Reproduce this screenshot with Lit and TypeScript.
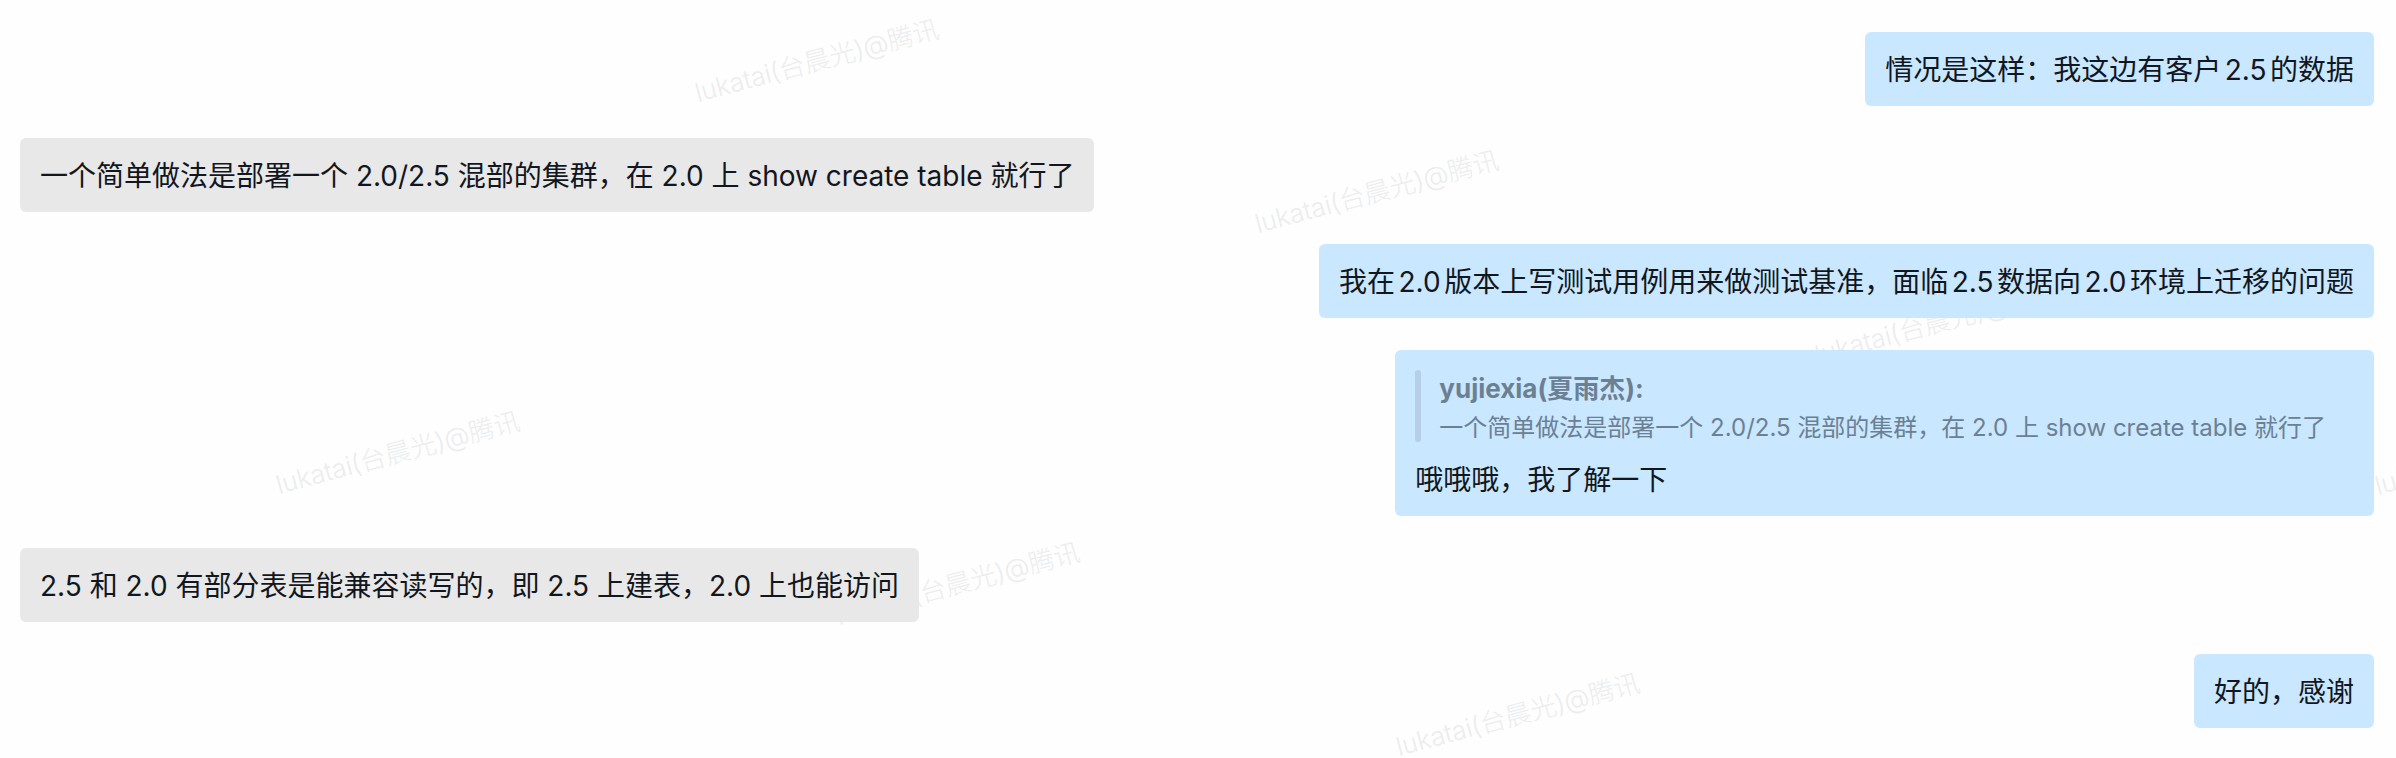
import { LitElement, html, css, nothing } from "lit";
import { customElement, property } from "lit/decorators.js";

interface Quote {
  author: string;
  text: string;
}

interface Message {
  mine: boolean;
  text: string;
  quote?: Quote;
}

const MESSAGES: Message[] = [
  { mine: true, text: "情况是这样：我这边有客户2.5的数据" },
  { mine: false, text: "一个简单做法是部署一个 2.0/2.5 混部的集群，在 2.0 上 show create table 就行了" },
  { mine: true, text: "我在2.0版本上写测试用例用来做测试基准，面临2.5数据向2.0环境上迁移的问题" },
  {
    mine: true,
    text: "哦哦哦，我了解一下",
    quote: {
      author: "yujiexia(夏雨杰):",
      text: "一个简单做法是部署一个 2.0/2.5 混部的集群，在 2.0 上 show create table 就行了",
    },
  },
  { mine: false, text: "2.5 和 2.0 有部分表是能兼容读写的，即 2.5 上建表，2.0 上也能访问" },
  { mine: true, text: "好的，感谢" },
];

const MARK_TEXT = "lukatai(台晨光)@腾讯";

// Watermarks sit on a slanted lattice: one step right also moves down.
const MARK_STEP = { x: 560, y: 131 };
const MARK_ROWS = [
  { x: 699, y: 106, count: 4 },
  { x: 280, y: 498, count: 3 },
];

@customElement("chat-bubble")
export class ChatBubble extends LitElement {
  @property({ attribute: false }) message!: Message;

  static styles = css`
    :host {
      display: block;
      max-width: 100%;
    }
    .bubble {
      box-sizing: border-box;
      padding: 20px 20px 18px;
      border-radius: 6px;
      background: #e8e8e8;
      color: #12161d;
      font-size: 28px;
      line-height: 36px;
    }
    .mine {
      background: #c9e7ff;
      text-autospace: normal;
    }
    .text {
      margin: 0;
    }
    .quote {
      position: relative;
      margin: 0 0 14px;
      padding: 0 28px 0 24px;
      color: #6c8093;
      font-size: 24px;
      line-height: 40px;
    }
    .quote::before {
      content: "";
      position: absolute;
      inset: 0 auto 6px 0;
      width: 6px;
      border-radius: 3px;
      background: #b5d0e6;
    }
    .author {
      display: block;
      font-size: 26px;
      line-height: 38px;
      font-style: normal;
      font-weight: 700;
    }
    .quoted {
      margin: 0;
    }
  `;

  render() {
    const { mine, text, quote } = this.message;
    return html`
      <div class="bubble ${mine ? "mine" : ""}">
        ${quote
          ? html`<blockquote class="quote">
              <cite class="author">${quote.author}</cite>
              <p class="quoted">${quote.text}</p>
            </blockquote>`
          : nothing}
        <p class="text">${text}</p>
      </div>
    `;
  }
}

@customElement("app-root")
export class AppRoot extends LitElement {
  static styles = css`
    :host {
      display: block;
      position: relative;
      box-sizing: border-box;
      min-height: 100vh;
      overflow: hidden;
      background: #fefefe;
      font-family: Inter, "Noto Sans CJK SC", sans-serif;
    }
    .marks {
      position: absolute;
      inset: 0;
      pointer-events: none;
    }
    .mark {
      position: absolute;
      white-space: nowrap;
      color: #ebedee;
      font-size: 26px;
      line-height: 26px;
      font-weight: 300;
      text-autospace: normal;
      margin-top: -26px;
      transform: rotate(-15deg);
      transform-origin: 0 100%;
    }
    .thread {
      position: relative;
      display: flex;
      flex-direction: column;
      gap: 32px;
      margin: 0;
      padding: 32px 22px 30px 20px;
      list-style: none;
    }
    .row {
      display: flex;
      justify-content: flex-start;
    }
    .row.mine {
      justify-content: flex-end;
    }
  `;

  render() {
    const marks = MARK_ROWS.flatMap((row) =>
      Array.from({ length: row.count }, (_, i) => ({
        x: row.x + i * MARK_STEP.x,
        y: row.y + i * MARK_STEP.y,
      })),
    );
    return html`
      <div class="marks" aria-hidden="true">
        ${marks.map(
          (m) => html`<span class="mark" style="left: ${m.x}px; top: ${m.y}px">${MARK_TEXT}</span>`,
        )}
      </div>
      <ol class="thread">
        ${MESSAGES.map(
          (m) => html`<li class="row ${m.mine ? "mine" : ""}">
            <chat-bubble .message=${m}></chat-bubble>
          </li>`,
        )}
      </ol>
    `;
  }
}
